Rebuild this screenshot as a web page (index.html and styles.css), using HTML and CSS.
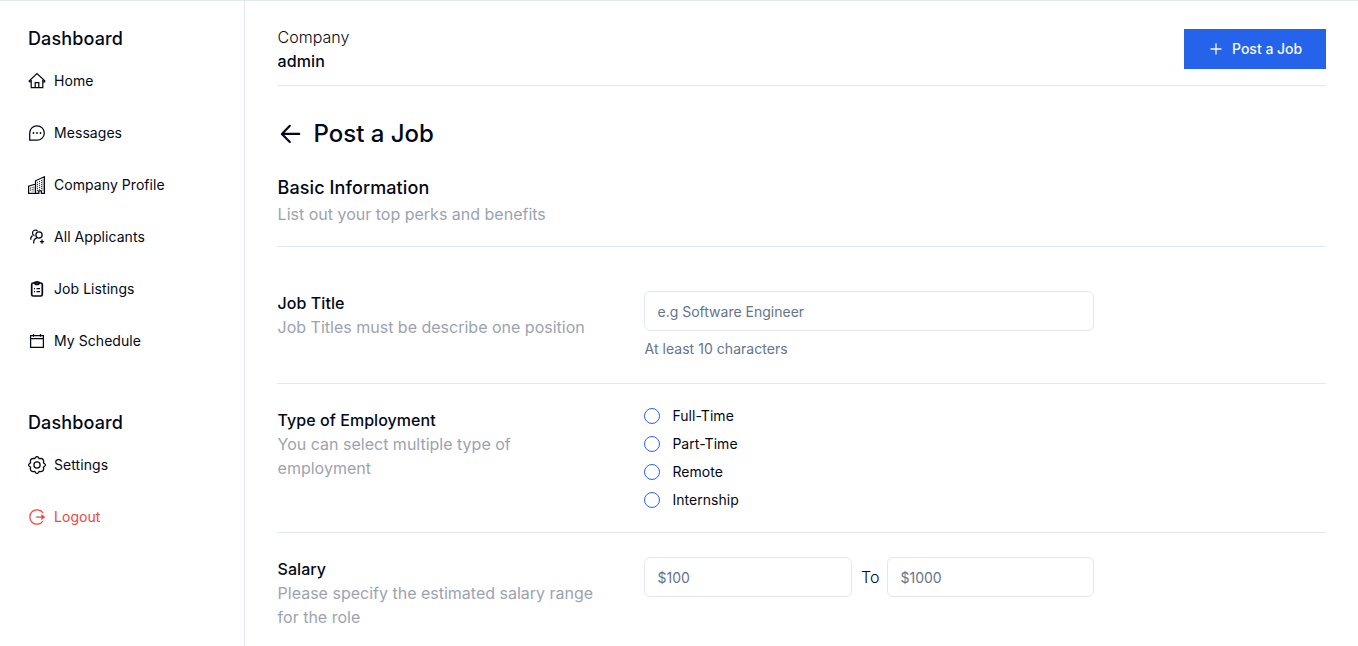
FILE: index.html
```html
<!DOCTYPE html>
<html lang="en">
<head>
<meta charset="utf-8">
<title>Post a Job</title>
<link rel="stylesheet" href="styles.css">
</head>
<body>
<div class="app">
  <aside class="sidebar">
    <h2 class="nav-title">Dashboard</h2>
    <nav class="nav">
      <a class="nav-item"><svg class="icon" viewBox="0 0 18 18"><path d="M1.300 9.900V8.700L9 1.600l7.700 7.100v1.200H14.800M1.300 9.900H3.200M3.200 8v7.700h11.600V8M7.200 15.700v-5h3.600v5"/></svg>Home</a>
      <a class="nav-item"><svg class="icon" viewBox="0 0 18 18"><path d="M1.700 16.200V9A7.300 7.200 0 1 1 9 16.200H1.700z"/><path class="dots" d="M5.500 9h.01M9 9h.01M12.500 9h.01"/></svg>Messages</a>
      <a class="nav-item"><svg class="icon" viewBox="0 0 18 18"><path d="M.6 17.300V10.200L7.500 8v9.300zM7.500 17.300V4.800L16.400.8v16.500h-3v-2.500h-2.600v2.500z"/><path class="windows" d="M2.500 11.500v4M4.200 11v4.500M5.900 10.500v5M9.500 6v10M11.500 5v8.800M13.500 4v9.800M15 3.500v12"/></svg>Company Profile</a>
      <a class="nav-item"><svg class="icon" viewBox="0 0 18 18"><circle cx="11" cy="7" r="3.100"/><path d="M5.700 15.500v-1.200c0-2.300 1.300-3.900 3.200-4.500M9.500 3C8 1.200 4.500 2.200 4.500 4.900c0 1.400.8 2.300 2 2.800M4.500 7.600c-1.300.8-1.900 2-1.900 4.100M14 11.500v4.200M11.900 13.600h4.200"/></svg>All Applicants</a>
      <a class="nav-item"><svg class="icon" viewBox="0 0 18 18"><rect class="bold" x="3.700" y="3" width="10.600" height="13" rx="1.500"/><path class="bold" d="M6.500 3c.3-1.700 4.700-1.700 5 0L10.300 4.500H7.700z"/><path d="M6 8.500h1M8.500 8.500H12M6 11.500h1M8.500 11.500H12"/></svg>Job Listings</a>
      <a class="nav-item"><svg class="icon" viewBox="0 0 18 18"><path d="M2.600 3.600h12.800v11.800H2.600zM2.600 6.600h12.800M5.500 1.900v2.800M12.500 1.900v2.800"/></svg>My Schedule</a>
    </nav>
    <h2 class="nav-title nav-title-second">Dashboard</h2>
    <nav class="nav">
      <a class="nav-item"><svg class="icon" viewBox="0 0 18 18"><circle cx="9" cy="9" r="3.100"/><path stroke-linejoin="round" d="M7.600 1.400Q9-.2 10.400 1.400L11.200 2.700 12.700 2.300Q15.500 2.500 15.700 5.300L15.300 6.800 16.600 7.600Q18.200 9 16.600 10.400L15.300 11.200 15.700 12.700Q15.500 15.500 12.700 15.700L11.200 15.300 10.400 16.600Q9 18.200 7.600 16.600L6.800 15.300 5.300 15.700Q2.500 15.500 2.300 12.700L2.700 11.200 1.400 10.400Q-.2 9 1.400 7.600L2.700 6.800 2.300 5.300Q2.500 2.500 5.300 2.300L6.800 2.700z"/></svg>Settings</a>
      <a class="nav-item nav-item-danger"><svg class="icon" viewBox="0 0 18 18"><path d="M15 5A7.200 7.200 0 1 0 15 13M8.200 9h7.800M14 7.300 16.200 9 14 10.700z"/></svg>Logout</a>
    </nav>
  </aside>
  <main class="main">
    <header class="topbar">
      <div>
        <p class="company-label">Company</p>
        <p class="company-name">admin</p>
      </div>
      <button class="post-button"><svg class="plus" viewBox="0 0 16 16"><path d="M8 2.500v11M2.500 8h11"/></svg>Post a Job</button>
    </header>
    <div class="page-title">
      <svg class="back" viewBox="0 0 26 26"><path d="M21.800 12.700H5.300M12.600 4.700 4.800 12.700l7.800 8"/></svg>
      <h1>Post a Job</h1>
    </div>
    <section class="intro">
      <h2>Basic Information</h2>
      <p class="muted">List out your top perks and benefits</p>
    </section>
    <section class="row row-title">
      <div class="description">
        <h3>Job Title</h3>
        <p class="muted">Job Titles must be describe one position</p>
      </div>
      <div class="field">
        <input class="input" placeholder="e.g Software Engineer">
        <p class="hint">At least 10 characters</p>
      </div>
    </section>
    <section class="row row-type">
      <div class="description">
        <h3>Type of Employment</h3>
        <p class="muted">You can select multiple type of employment</p>
      </div>
      <div class="field options">
        <label class="option"><span class="radio"></span>Full-Time</label>
        <label class="option"><span class="radio"></span>Part-Time</label>
        <label class="option"><span class="radio"></span>Remote</label>
        <label class="option"><span class="radio"></span>Internship</label>
      </div>
    </section>
    <section class="row row-salary">
      <div class="description">
        <h3>Salary</h3>
        <p class="muted">Please specify the estimated salary range for the role</p>
      </div>
      <div class="field salary">
        <input class="input" placeholder="$100">
        <span>To</span>
        <input class="input" placeholder="$1000">
      </div>
    </section>
  </main>
</div>
</body>
</html>
```
FILE: styles.css
```css
* { box-sizing: border-box; margin: 0; padding: 0; }
body {
  font-family: Inter, "Liberation Sans", sans-serif;
  font-size: 16px;
  line-height: 24px;
  color: #020817;
  background: #fff;
  overflow: hidden;
}
svg { fill: none; stroke: currentColor; flex: none; }
h1, h2, h3 { font-weight: 500; }
.app { display: flex; height: 646px; border-top: 1px solid #e2e8f0; }
.sidebar { width: 245px; flex: none; padding: 24px 12px 0; border-right: 1px solid #e2e8f0; }
.nav-title { padding-left: 16px; font-size: 18px; line-height: 28px; letter-spacing: .12px; }
.nav-title-second { margin-top: 48px; }
.nav { display: flex; flex-direction: column; gap: 12px; margin-top: 8px; }
.nav-item {
  display: flex;
  align-items: center;
  gap: 8px;
  height: 40px;
  padding-left: 16px;
  font-size: 14px;
  letter-spacing: .06px;
}
.nav-item-danger { color: #ef4444; }
.icon { width: 18px; height: 18px; stroke-width: 1.25; }
.icon .bold { stroke-width: 1.7; }
.icon .dots { stroke-width: 1.8; stroke-linecap: round; }
.icon .windows { stroke-width: .8; stroke-dasharray: 1.2 .8; }
.main { flex: 1; padding: 24px 32px 0; }
.topbar {
  display: flex;
  justify-content: space-between;
  height: 61px;
  border-bottom: 1px solid #e2e8f0;
}
.topbar > div, .intro h2, .intro p, .description { padding-left: .6px; }
.company-label { font-weight: 300; }
.company-name { font-weight: 500; letter-spacing: .08px; }
.post-button {
  display: flex;
  align-items: center;
  gap: 8px;
  width: 142px;
  height: 40px;
  margin-top: 4px;
  padding: 0 24px;
  border: 0;
  background: #2563eb;
  color: #f8fafc;
  font: 500 14px/20px Inter, "Liberation Sans", sans-serif;
  white-space: nowrap;
}
.plus { width: 16px; height: 16px; stroke-width: 1.3; }
.page-title { display: flex; align-items: center; gap: 10px; margin-top: 32px; height: 32px; }
.page-title h1 { font-size: 24px; line-height: 32px; }
.back { width: 26.500px; height: 26.500px; stroke-width: 2.1; stroke-linecap: round; stroke-linejoin: round; }
.intro { height: 97px; padding-top: 24px; border-bottom: 1px solid #e2e8f0; }
.intro h2 { font-size: 18px; line-height: 28px; letter-spacing: .09px; }
.muted { color: #9ca3af; font-weight: 400; }
.row { display: flex; border-bottom: 1px solid #e2e8f0; }
.row-title { height: 137px; padding-top: 44px; }
.row-type { height: 149px; padding-top: 24px; }
.row-salary { height: 120px; padding-top: 24px; border: 0; }
.description { width: 367px; padding-right: 40px; flex: none; }
.description h3 { font-size: 16px; letter-spacing: .05px; }
.field { width: 450px; }
.input {
  display: block;
  width: 100%;
  height: 40px;
  padding: 8px 12.500px;
  border: 1px solid #e2e8f0;
  border-radius: 6px;
  background: #fff;
  font: 400 14px/20px Inter, "Liberation Sans", sans-serif;
}
.input::placeholder { color: #64748b; opacity: 1; }
.hint { margin-top: 8px; padding-left: .5px; font-size: 14px; line-height: 20px; letter-spacing: .04px; color: #64748b; }
.options { display: grid; grid-auto-rows: 16px; gap: 12px; }
.option { display: flex; align-items: center; gap: 12.400px; font-size: 14px; line-height: 16px; letter-spacing: .04px; }
.radio { width: 16px; height: 16px; border: 1px solid #2563eb; border-radius: 50%; }
.salary { display: flex; align-items: flex-start; gap: 9px; }
.salary .input { width: 207px; }
.salary .input:first-child { width: 208px; }
.salary span { width: 17px; line-height: 40px; font-weight: 300; white-space: nowrap; }
```
